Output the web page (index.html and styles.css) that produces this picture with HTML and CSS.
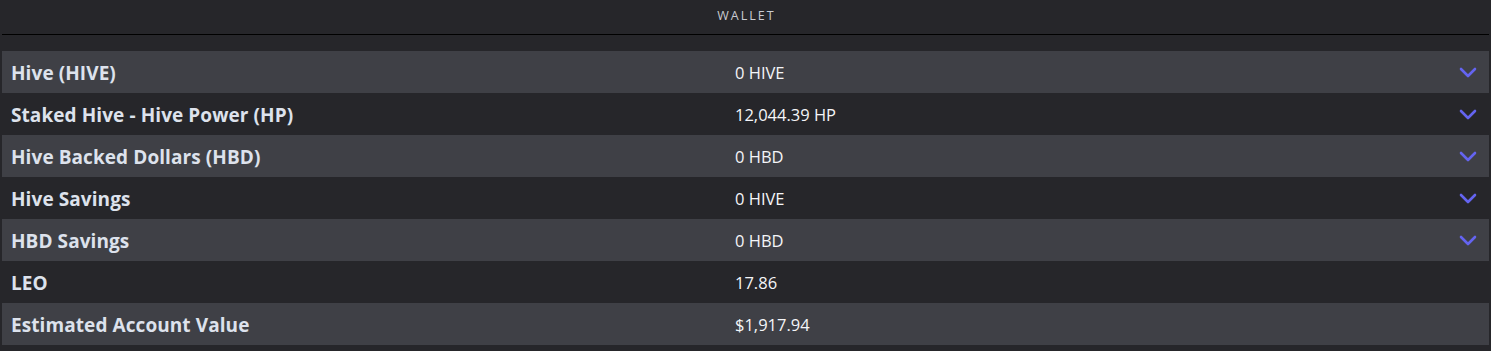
FILE: index.html
```html
<!DOCTYPE html>
<html>
<head>
<meta charset="utf-8">
<link rel="stylesheet" href="styles.css">
</head>
<body>
<div class="wallet">
  <div class="title">WALLET</div>
  <div class="rows">
    <div class="row alt"><span class="label">Hive (HIVE)</span><span class="value">0 HIVE</span><span class="chev"><svg width="18" height="11" viewBox="0 0 18 11"><path d="M2 2 L9 9 L16 2" fill="none" stroke="#6464f0" stroke-width="2.6" stroke-linecap="round" stroke-linejoin="round"/></svg></span></div>
    <div class="row"><span class="label">Staked Hive - Hive Power (HP)</span><span class="value">12,044.39 HP</span><span class="chev"><svg width="18" height="11" viewBox="0 0 18 11"><path d="M2 2 L9 9 L16 2" fill="none" stroke="#6464f0" stroke-width="2.6" stroke-linecap="round" stroke-linejoin="round"/></svg></span></div>
    <div class="row alt"><span class="label">Hive Backed Dollars (HBD)</span><span class="value">0 HBD</span><span class="chev"><svg width="18" height="11" viewBox="0 0 18 11"><path d="M2 2 L9 9 L16 2" fill="none" stroke="#6464f0" stroke-width="2.6" stroke-linecap="round" stroke-linejoin="round"/></svg></span></div>
    <div class="row"><span class="label">Hive Savings</span><span class="value">0 HIVE</span><span class="chev"><svg width="18" height="11" viewBox="0 0 18 11"><path d="M2 2 L9 9 L16 2" fill="none" stroke="#6464f0" stroke-width="2.6" stroke-linecap="round" stroke-linejoin="round"/></svg></span></div>
    <div class="row alt"><span class="label">HBD Savings</span><span class="value">0 HBD</span><span class="chev"><svg width="18" height="11" viewBox="0 0 18 11"><path d="M2 2 L9 9 L16 2" fill="none" stroke="#6464f0" stroke-width="2.6" stroke-linecap="round" stroke-linejoin="round"/></svg></span></div>
    <div class="row"><span class="label">LEO</span><span class="value">17.86</span><span class="chev"></span></div>
    <div class="row alt"><span class="label">Estimated Account Value</span><span class="value">$1,917.94</span><span class="chev"></span></div>
  </div>
</div>
</body>
</html>
```
FILE: styles.css
```css
html, body {
  margin: 0;
  padding: 0;
  background: #26262a;
  height: 351px;
  overflow: hidden;
}
.wallet {
  padding: 0 2px;
  font-family: "Open Sans", "Noto Sans", sans-serif;
}
.title {
  height: 35px;
  border-bottom: 1px solid #000;
  display: flex;
  align-items: center;
  justify-content: center;
  font-size: 12.5px;
  letter-spacing: 2px;
  color: #c9cbd1;
  line-height: 1;
  padding-bottom: 2px;
  padding-left: 2px;
  box-sizing: border-box;
}
.rows {
  margin-top: 16px;
}
.row {
  display: grid;
  grid-template-columns: 724px 1fr 30px;
  align-items: center;
  height: 42px;
  padding-left: 9px;
}
.row.alt {
  background: #3f4046;
}
.label {
  font-weight: 700;
  font-size: 19px;
  letter-spacing: 0.08px;
  color: #dde2ec;
  line-height: 1;
  margin-top: 3px;
}
.value {
  font-size: 16.5px;
  color: #f4f5f8;
  line-height: 1;
  margin-top: 2px;
}
.chev {
  display: flex;
  align-items: center;
  height: 100%;
}
.chev svg {
  display: block;
  margin-top: 1px;
}
```
